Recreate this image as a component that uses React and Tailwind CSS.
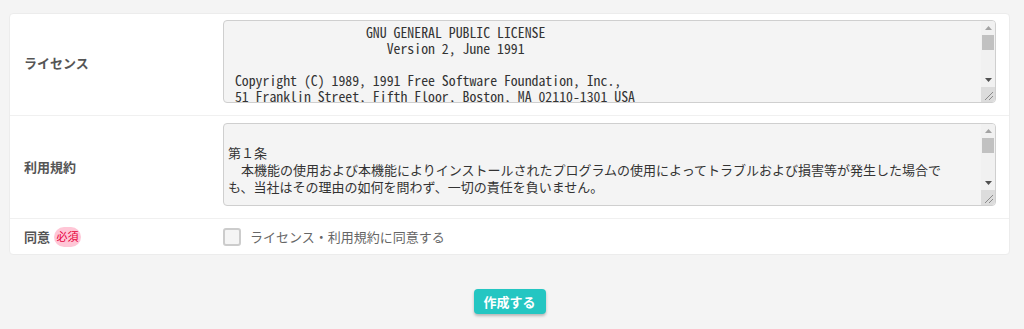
import React from "react";

const GPL = [
  "\t\t    GNU GENERAL PUBLIC LICENSE",
  "\t\t       Version 2, June 1991",
  "",
  " Copyright (C) 1989, 1991 Free Software Foundation, Inc.,",
  " 51 Franklin Street, Fifth Floor, Boston, MA 02110-1301 USA",
  " Everyone is permitted to copy and distribute verbatim copies",
  " of this license document, but changing it is not allowed.",
  "",
  "\t\t\t    Preamble",
  "",
  "  The licenses for most software are designed to take away your",
  "freedom to share and change it.  By contrast, the GNU General Public",
  "License is intended to guarantee your freedom to share and change free",
  "software--to make sure the software is free for all its users.",
].join("\n");

const TERMS = [
  "",
  "第１条",
  "　本機能の使用および本機能によりインストールされたプログラムの使用によってトラブルおよび損害等が発生した場合で",
  "も、当社はその理由の如何を問わず、一切の責任を負いません。",
  "",
  "第２条",
  "　本機能によりインストールされたプログラムの著作権は、各プログラムの著作権者に帰属します。",
].join("\n");

function FakeScrollbar() {
  return (
    <div className="absolute top-[1px] right-[1px] bottom-[1px] w-[14px] flex flex-col bg-[#f1f1f1] rounded-tr-[3px] rounded-br-[3px] overflow-hidden">
      <div className="h-[14px] flex items-center justify-center">
        <svg width="7" height="4" viewBox="0 0 7 4">
          <path d="M3.5 0 L7 4 L0 4 Z" fill="#a3a3a3" />
        </svg>
      </div>
      <div className="flex-1 px-[1px]">
        <div className="h-[15px] bg-[#c1c1c1]" />
      </div>
      <div className="h-[14px] flex items-center justify-center">
        <svg width="7" height="4" viewBox="0 0 7 4">
          <path d="M0 0 L7 0 L3.5 4 Z" fill="#505050" />
        </svg>
      </div>
      <div className="h-[15px] bg-[#dcdcdc] flex items-end justify-end p-[2px]">
        <svg width="9" height="9" viewBox="0 0 9 9">
          <path d="M9 1 L1 9 M9 5 L5 9" stroke="#8a8a8a" strokeWidth="1" />
        </svg>
      </div>
    </div>
  );
}

export default function App() {
  return (
    <div
      className="min-h-[329px] bg-[#f4f4f4] pl-[9px] pr-[14px] pt-[13px]"
      style={{ fontFamily: '"Noto Sans CJK JP", "Noto Sans", sans-serif' }}
    >
      <div className="bg-white rounded-[4px] border border-[#ececec]">
        {/* License row */}
        <div className="flex items-center border-b border-[#f0f0f0]">
          <div className="w-[213px] shrink-0 pl-[14px] pb-[3px] text-[13px] font-bold text-[#555]">
            ライセンス
          </div>
          <div className="flex-1 pt-[6px] pb-[12px] pr-[13px]">
            <div className="relative">
              <textarea
                readOnly
                defaultValue={GPL}
                className="block w-full h-[83px] bg-[#f4f4f4] border border-[#cfcfcf] rounded-[4px] pl-[4px] pr-[20px] pt-[3px] text-[13.8px] leading-[16px] text-[#333] outline-none resize-none overflow-hidden [tab-size:8]"
                style={{
                  fontFamily:
                    '"Noto Sans Mono CJK JP", "Noto Sans Mono CJK SC", "Liberation Mono", monospace',
                }}
              />
              <FakeScrollbar />
            </div>
          </div>
        </div>
        {/* Terms row */}
        <div className="flex items-center border-b border-[#f0f0f0]">
          <div className="w-[213px] shrink-0 pl-[14px] pb-[1px] text-[13px] font-bold text-[#555]">
            利用規約
          </div>
          <div className="flex-1 pt-[7px] pb-[12px] pr-[13px]">
            <div className="relative">
              <textarea
                readOnly
                defaultValue={TERMS}
                className="block w-full h-[83px] bg-[#f4f4f4] border border-[#cfcfcf] rounded-[4px] pl-[4px] pr-[20px] pt-[3px] text-[13px] leading-[17px] text-[#333] outline-none whitespace-pre resize-none overflow-hidden"
                style={{ fontFamily: '"Noto Sans CJK JP", sans-serif' }}
              />
              <FakeScrollbar />
            </div>
          </div>
        </div>
        {/* Agree row */}
        <div className="flex items-center h-[35px]">
          <div className="w-[213px] shrink-0 pl-[14px] flex items-center gap-[4px]">
            <span className="text-[13px] font-bold text-[#555]">同意</span>
            <span className="inline-flex items-center justify-center w-[27px] h-[20px] rounded-full bg-[#ffc6d6] text-[11px] text-[#e6003a]">
              必須
            </span>
          </div>
          <label className="flex items-center gap-[9px]">
            <input
              type="checkbox"
              className="appearance-none w-[18px] h-[18px] border-2 border-[#cccccc] rounded-[3px] bg-[#f5f5f5] m-0"
            />
            <span className="text-[13px] text-[#666]">ライセンス・利用規約に同意する</span>
          </label>
        </div>
      </div>
      <div className="flex justify-center pt-[34px]">
        <button className="w-[72px] h-[25px] rounded-[4px] bg-[#24c6c2] text-white text-[13px] font-bold shadow-[0_2px_3px_rgba(0,0,0,0.25)]">
          作成する
        </button>
      </div>
    </div>
  );
}
